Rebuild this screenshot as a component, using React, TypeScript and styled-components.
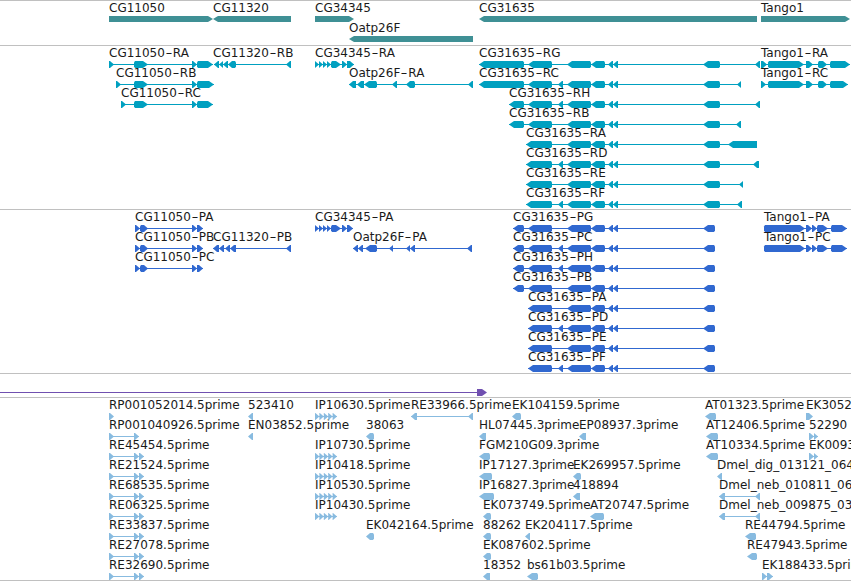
import React from 'react';
import styled, { createGlobalStyle } from 'styled-components';

type Exon = [number, number];
type Strand = 'L' | 'R';

interface FeatureData {
  name: string;
  x: number;
  row: number;
  strand: Strand;
  exons: Exon[];
  square?: boolean;
  bar?: boolean;
}

const GlobalStyle = createGlobalStyle`
  html, body {
    margin: 0;
    background: #fff;
    overflow: hidden;
  }
`;

const Page = styled.div`
  width: 851px;
  height: 581px;
  overflow: hidden;
  background: #fff;
  border-top: 1px solid #c0c0c0;
  box-sizing: border-box;
  font-family: 'DejaVu Sans', sans-serif;
`;

const Track = styled.section<{ $height: number; $color: string }>`
  position: relative;
  height: ${p => p.$height}px;
  color: ${p => p.$color};
  border-bottom: 1px solid #c0c0c0;
  overflow: hidden;
`;

const ResultStrip = styled.div`
  height: 8px;
  padding-top: 15px;
  border-bottom: 1px solid #c0c0c0;
  color: #7050b0;
  line-height: 0;
`;

const Feature = styled.div.attrs<{ $x: number; $row: number }>(p => ({
  style: { left: p.$x, top: 1 + p.$row * 20 },
}))`
  position: absolute;
  display: flex;
  flex-direction: column;
`;

const Label = styled.span`
  height: 14px;
  font-size: 12px;
  line-height: 12px;
  color: #1a1a1a;
  white-space: nowrap;
`;

const Hyphen = styled.span`
  display: inline-block;
  width: 8px;
  text-align: center;
  transform: scaleX(1.6);
`;

const Glyph = styled.svg`
  display: block;
  height: 8px;
  overflow: visible;
  fill: currentColor;
  stroke: none;
`;

// exon outline in local coordinates, tip on the side the strand runs to
const exonPoints = (a: number, b: number, strand: Strand, square: boolean, bot = 7) => {
  const w = b - a;
  const t = w >= 10 ? 5 : Math.min(4, w);
  const top = 0;
  const mid = bot / 2;
  const tapered = w >= 8 && !square;
  if (strand === 'L') {
    const tail = tapered
      ? `${b - 1},${top} ${b},${mid - 2} ${b},${mid + 2} ${b - 1},${bot}`
      : `${b},${top} ${b},${bot}`;
    return `${a},${mid} ${a + t},${top} ${tail} ${a + t},${bot}`;
  }
  const tail = tapered
    ? `${a + 1},${bot} ${a},${mid + 2} ${a},${mid - 2} ${a + 1},${top}`
    : `${a},${bot} ${a},${top}`;
  return `${b},${mid} ${b - t},${bot} ${tail} ${b - t},${top}`;
};

const Transcript: React.FC<{ f: FeatureData }> = ({ f }) => {
  const start = Math.min(...f.exons.map(e => e[0]));
  const end = Math.max(...f.exons.map(e => e[1]));
  const parts = f.name.split('-');
  return (
    <Feature $x={f.x} $row={f.row}>
      <Label>
        {parts.map((part, i) => (
          <React.Fragment key={i}>
            {i > 0 && <Hyphen>-</Hyphen>}
            {part}
          </React.Fragment>
        ))}
      </Label>
      <Glyph width={end - f.x} viewBox={`0 0 ${end - f.x} 8`}>
        {f.exons.length > 1 && (
          <rect x={start - f.x} y={3} width={end - start} height={1} />
        )}
        {f.exons.map((e, i) => (
          <polygon
            key={i}
            points={exonPoints(
              e[0] - f.x,
              e[1] - f.x,
              f.strand,
              !!f.square && i === f.exons.length - 1,
              f.bar ? 6 : 7,
            )}
          />
        ))}
      </Glyph>
    </Feature>
  );
};

const Features: React.FC<{ items: FeatureData[] }> = ({ items }) => (
  <>
    {items.map(f => (
      <Transcript key={f.name + f.x + f.row} f={f} />
    ))}
  </>
);

const chain = (start: number, count: number, w: number): Exon[] =>
  Array.from({ length: count }, (_, i) => [start + i * w, start + (i + 1) * w] as Exon);

const one = (name: string, x: number, row: number, strand: Strand, end: number): FeatureData => ({
  name, x, row, strand, exons: [[x, end]],
});

const gene = (name: string, x: number, row: number, strand: Strand, end: number): FeatureData => ({
  ...one(name, x, row, strand, end), square: true, bar: true,
});

const genes: FeatureData[] = [
  gene('CG11050', 109, 0, 'R', 213),
  gene('CG11320', 213, 0, 'L', 291),
  gene('CG34345', 315, 0, 'R', 354),
  gene('Oatp26F', 349, 1, 'L', 473),
  gene('CG31635', 479, 0, 'L', 757),
  gene('Tango1', 761, 0, 'R', 850),
];

const midExons: Exon[] = [[567, 591], [591, 605], [608, 613], [613, 618]];
const cgR = (head: Exon[], tail: Exon[]): Exon[] => [...head, ...midExons, [703, 720], ...tail];
const cgP = (head: Exon[]): Exon[] => [...head, ...midExons, [703, 715]];

const mrna: FeatureData[] = [
  { name: 'CG11050-RA', x: 109, row: 0, strand: 'R', exons: [[109, 114], [134, 148], [192, 197], [197, 213]] },
  { name: 'CG11050-RB', x: 116, row: 1, strand: 'R', exons: [[116, 121], [134, 148], [192, 197], [197, 214]] },
  { name: 'CG11050-RC', x: 121, row: 2, strand: 'R', exons: [[121, 126], [134, 148], [192, 197], [197, 213]] },
  { name: 'CG11320-RB', x: 213, row: 0, strand: 'L', exons: [[214, 219], [219, 223], [223, 228], [228, 236], [286, 291]] },
  { name: 'CG34345-RA', x: 315, row: 0, strand: 'R', exons: [...chain(315, 4, 4), [331, 341], [342, 347], [347, 354]] },
  { name: 'Oatp26F-RA', x: 349, row: 1, strand: 'L', exons: [[349, 356], [357, 364], [364, 377], [392, 397], [406, 415], [468, 473]] },
  { name: 'CG31635-RG', x: 479, row: 0, strand: 'L', exons: cgR([[479, 524], [528, 552]], [[755, 760]]) },
  { name: 'CG31635-RC', x: 479, row: 1, strand: 'L', exons: cgR([[479, 524], [528, 552], [558, 563]], [[737, 741]]) },
  { name: 'CG31635-RH', x: 509, row: 2, strand: 'L', exons: cgR([[509, 524], [528, 552], [558, 563]], [[755, 760]]) },
  { name: 'CG31635-RB', x: 509, row: 3, strand: 'L', exons: cgR([[509, 524], [528, 552]], [[736, 741]]) },
  { name: 'CG31635-RA', x: 526, row: 4, strand: 'L', square: true, exons: cgR([[526, 552]], [[728, 757]]) },
  { name: 'CG31635-RD', x: 526, row: 5, strand: 'L', exons: cgR([[526, 552], [558, 563]], [[753, 759]]) },
  { name: 'CG31635-RE', x: 526, row: 6, strand: 'L', exons: cgR([[526, 552]], [[739, 743]]) },
  { name: 'CG31635-RF', x: 526, row: 7, strand: 'L', exons: cgR([[526, 552], [558, 563]], [[737, 742]]) },
  { name: 'Tango1-RA', x: 761, row: 0, strand: 'R', exons: [[761, 767], [768, 804], [806, 813], [818, 827], [830, 850]] },
  { name: 'Tango1-RC', x: 761, row: 1, strand: 'R', exons: [[761, 766], [768, 804], [806, 813], [818, 827], [830, 848]] },
];

const cgPeptideExons: Exon[] = [[135, 140], [140, 148], [192, 197], [197, 203]];
const tangoPeptide: Exon[] = [[764, 805], [806, 812], [812, 817], [817, 828], [831, 847]];

const peptides: FeatureData[] = [
  { name: 'CG11050-PA', x: 135, row: 0, strand: 'R', exons: cgPeptideExons },
  { name: 'CG11050-PB', x: 135, row: 1, strand: 'R', exons: cgPeptideExons },
  { name: 'CG11050-PC', x: 135, row: 2, strand: 'R', exons: cgPeptideExons },
  { name: 'CG11320-PB', x: 213, row: 1, strand: 'L', exons: [[213, 219], [219, 224], [225, 230], [230, 236], [286, 291]] },
  { name: 'CG34345-PA', x: 315, row: 0, strand: 'R', exons: [...chain(315, 4, 4), [331, 341], [342, 347], [347, 353]] },
  { name: 'Oatp26F-PA', x: 353, row: 1, strand: 'L', exons: [[353, 358], [358, 363], [365, 377], [389, 393], [406, 410], [410, 415], [467, 472]] },
  { name: 'CG31635-PG', x: 513, row: 0, strand: 'L', exons: cgP([[513, 524], [528, 552]]) },
  { name: 'CG31635-PC', x: 513, row: 1, strand: 'L', exons: cgP([[513, 524], [528, 552], [558, 563]]) },
  { name: 'CG31635-PH', x: 513, row: 2, strand: 'L', exons: cgP([[513, 524], [528, 552], [558, 563]]) },
  { name: 'CG31635-PB', x: 513, row: 3, strand: 'L', exons: cgP([[513, 524], [528, 552]]) },
  { name: 'CG31635-PA', x: 528, row: 4, strand: 'L', exons: cgP([[528, 552]]) },
  { name: 'CG31635-PD', x: 528, row: 5, strand: 'L', exons: cgP([[528, 552], [558, 563]]) },
  { name: 'CG31635-PE', x: 528, row: 6, strand: 'L', exons: cgP([[528, 552]]) },
  { name: 'CG31635-PF', x: 528, row: 7, strand: 'L', exons: cgP([[528, 552], [558, 563]]) },
  { name: 'Tango1-PA', x: 764, row: 0, strand: 'R', exons: tangoPeptide },
  { name: 'Tango1-PC', x: 764, row: 1, strand: 'R', exons: tangoPeptide },
];

const reEst = (name: string, row: number): FeatureData => ({
  name, x: 109, row, strand: 'R', exons: [[109, 114], [134, 139], [139, 144]],
});
const ipEst = (name: string, row: number): FeatureData => ({
  name, x: 315, row, strand: 'R', exons: chain(315, 5, 4.4),
});

const ests: FeatureData[] = [
  one('RP001052014.5prime', 109, 0, 'R', 114),
  { name: 'RP001040926.5prime', x: 109, row: 1, strand: 'R', exons: [[109, 114], [134, 139]] },
  reEst('RE45454.5prime', 2),
  reEst('RE21524.5prime', 3),
  reEst('RE68535.5prime', 4),
  reEst('RE06325.5prime', 5),
  reEst('RE33837.5prime', 6),
  reEst('RE27078.5prime', 7),
  reEst('RE32690.5prime', 8),
  one('523410', 248, 0, 'L', 253),
  one('EN03852.5prime', 248, 1, 'L', 253),
  ipEst('IP10630.5prime', 0),
  ipEst('IP10730.5prime', 2),
  ipEst('IP10418.5prime', 3),
  ipEst('IP10530.5prime', 4),
  ipEst('IP10430.5prime', 5),
  { name: 'RE33966.5prime', x: 411, row: 0, strand: 'L', exons: [[411, 417], [468, 473]] },
  one('38063', 366, 1, 'L', 374),
  one('EK042164.5prime', 366, 6, 'L', 374),
  one('EK104159.5prime', 512, 0, 'L', 521),
  one('HL07445.3prime', 479, 1, 'L', 486),
  one('EP08937.3prime', 579, 1, 'L', 586),
  one('FGM210G09.3prime', 479, 2, 'L', 490),
  one('IP17127.3prime', 479, 3, 'L', 492),
  one('EK269957.5prime', 573, 3, 'L', 581),
  one('IP16827.3prime', 479, 4, 'L', 494),
  one('418894', 573, 4, 'L', 580),
  one('EK073749.5prime', 483, 5, 'L', 491),
  one('AT20747.5prime', 590, 5, 'L', 604),
  one('88262', 483, 6, 'L', 491),
  one('EK204117.5prime', 525, 6, 'L', 530),
  one('EK087602.5prime', 483, 7, 'L', 491),
  one('18352', 483, 8, 'L', 490),
  one('bs61b03.5prime', 527, 8, 'L', 538),
  one('AT01323.5prime', 705, 0, 'L', 716),
  one('EK3052', 806, 0, 'R', 813),
  one('AT12406.5prime', 706, 1, 'L', 718),
  { name: '52290', x: 809, row: 1, strand: 'R', exons: [[809, 814], [814, 818]] },
  one('AT10334.5prime', 706, 2, 'L', 718),
  { name: 'EK0093', x: 809, row: 2, strand: 'R', exons: [[809, 814], [814, 818]] },
  one('Dmel_dig_013121_064', 717, 3, 'L', 722),
  { name: 'Dmel_neb_010811_06', x: 719, row: 4, strand: 'L', exons: [[719, 725], [755, 760]] },
  { name: 'Dmel_neb_009875_03', x: 719, row: 5, strand: 'L', exons: [[719, 725], [755, 760]] },
  one('RE44794.5prime', 745, 6, 'L', 756),
  one('RE47943.5prime', 747, 7, 'L', 757),
  { name: 'EK188433.5prime', x: 762, row: 8, strand: 'R', exons: [[762, 767], [767, 773]] },
];

const App: React.FC = () => (
  <>
    <GlobalStyle />
    <Page>
      <Track $height={44} $color="#3f9095">
        <Features items={genes} />
      </Track>
      <Track $height={163} $color="#00a0c0">
        <Features items={mrna} />
      </Track>
      <Track $height={163} $color="#3068d0">
        <Features items={peptides} />
      </Track>
      <ResultStrip>
        <Glyph width={851} viewBox="0 0 851 8">
          <rect x={0} y={3} width={478} height={1} />
          <polygon points={exonPoints(477, 487, 'R', true)} />
        </Glyph>
      </ResultStrip>
      <Track $height={182} $color="#88bbe0">
        <Features items={ests} />
      </Track>
    </Page>
  </>
);

export default App;
